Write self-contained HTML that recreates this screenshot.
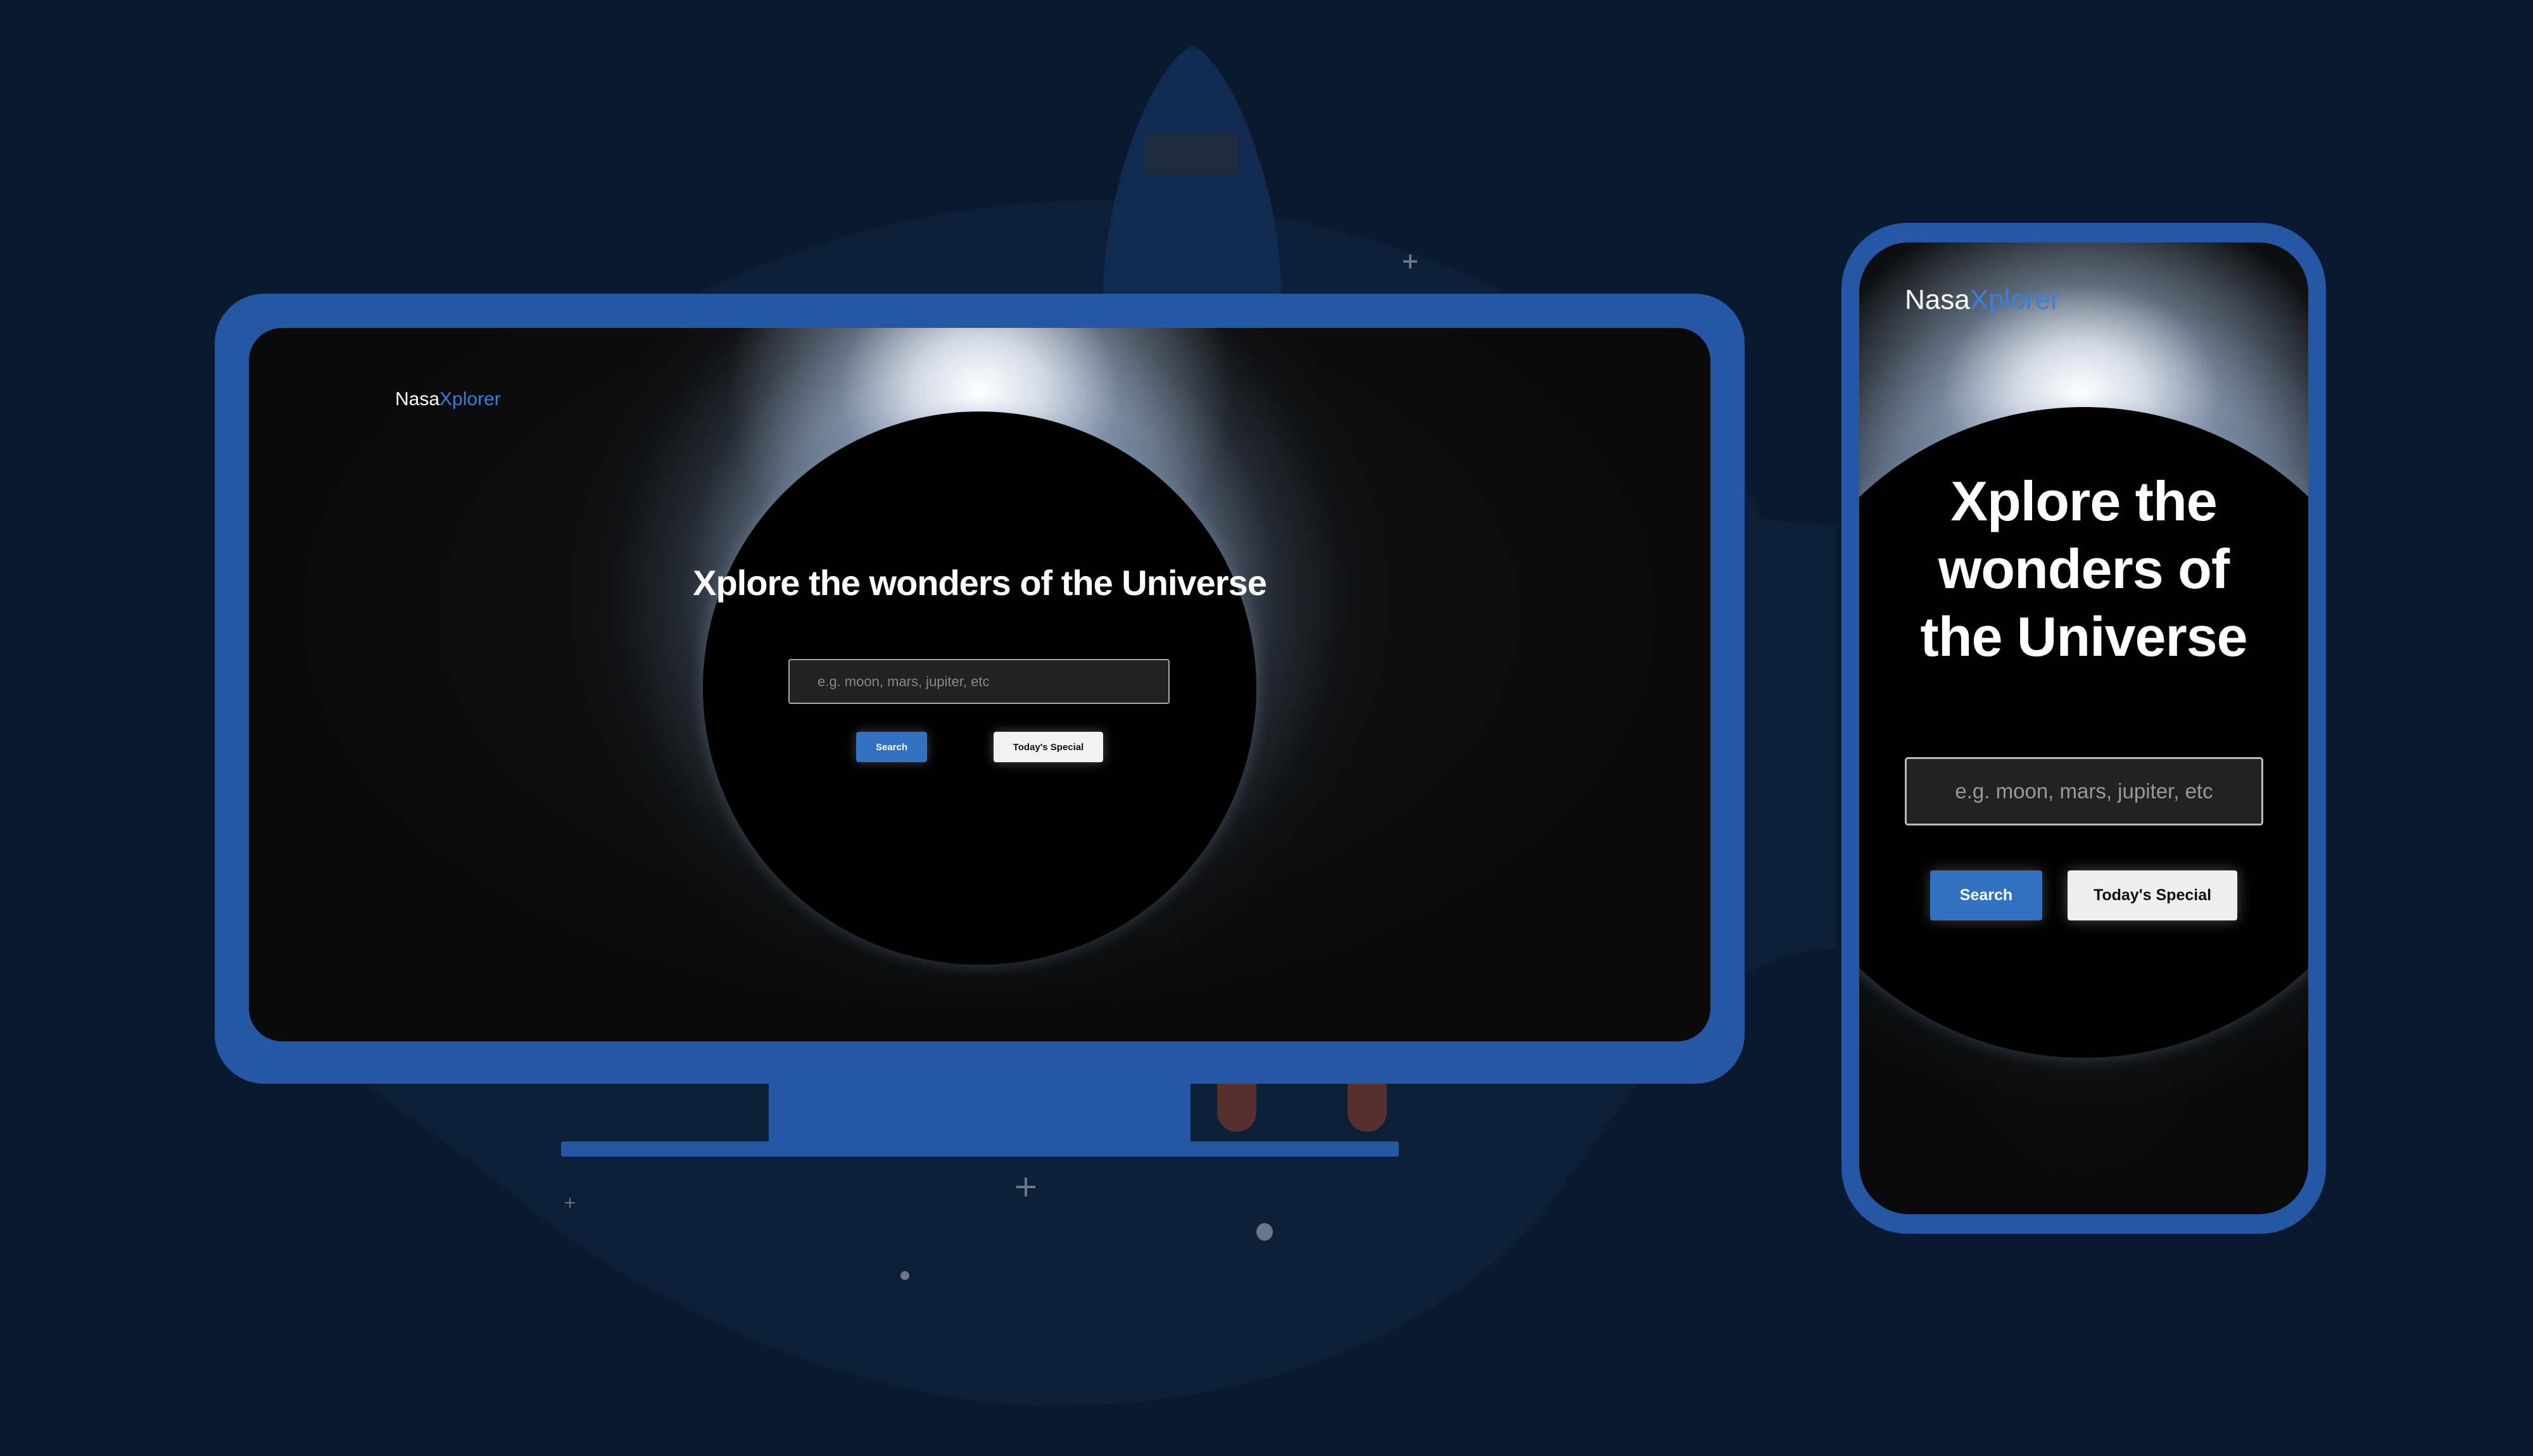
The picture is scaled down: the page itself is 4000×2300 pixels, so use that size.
<!DOCTYPE html>
<html><head><meta charset="utf-8"><style>
*{margin:0;padding:0;box-sizing:border-box}
body{width:4000px;height:2300px;background:#0a192d;position:relative;overflow:hidden;font-family:"Liberation Sans",sans-serif}
.abs{position:absolute}
.screen{overflow:hidden;background:#0b0b0b}
.glow{position:absolute;border-radius:50%}
.btn{position:absolute;display:flex;align-items:center;justify-content:center;font-weight:bold;border-radius:4px}
</style></head><body>
<svg class="abs" style="left:0;top:0" width="4000" height="2300">
<path d="M520 1650 C480 1200 700 600 1200 420 C1500 300 1800 290 2100 360 C2500 460 2750 700 2780 820 L2900 830 L2900 1500 C2700 1500 2600 1700 2450 1900 C2250 2150 1900 2230 1620 2220 C1300 2200 1000 2050 800 1880 C650 1760 540 1700 520 1650Z" fill="#0d1e37"/>
<path d="M1742 470 C1742 300 1820 100 1883 72 C1946 100 2024 300 2024 470 Z" fill="#112a4f"/>
<rect x="1808" y="209" width="147" height="68" rx="10" fill="#1e2a3d"/>
<rect x="1922" y="1700" width="62" height="88" rx="31" fill="#55302f"/>
<rect x="2128" y="1700" width="62" height="88" rx="31" fill="#55302f"/>
<rect x="1922" y="1700" width="62" height="40" fill="#55302f"/>
<rect x="2128" y="1700" width="62" height="40" fill="#55302f"/>
<g stroke="#6b7789" stroke-width="4"><path d="M2227 402v22M2216 413h22"/><path d="M1620 1860v30M1605 1875h30"/></g>
<g stroke="#6b7789" stroke-width="2"><path d="M900 1892v16M892 1900h16"/></g>
<ellipse cx="1997" cy="1946" rx="13" ry="14" fill="#6b7789"/>
<circle cx="1429" cy="2015" r="7" fill="#6b7789"/>
</svg>
<!-- monitor -->
<div class="abs" style="left:339px;top:464px;width:2416px;height:1248px;background:#2657a5;border-radius:78px"></div>
<div class="abs" style="left:1214px;top:1700px;width:666px;height:112px;background:#2657a5"></div>
<div class="abs" style="left:886px;top:1803px;width:1323px;height:24px;background:#2657a5;border-radius:4px"></div>
<div class="abs screen" style="left:393px;top:518px;width:2308px;height:1127px;border-radius:52px;background:radial-gradient(ellipse at 50% 40%,#141414 0%,#0a0a0a 70%)">
  <div class="glow" style="left:504px;top:-230px;width:1300px;height:1300px;background:radial-gradient(closest-side,rgba(150,175,210,.5) 55%,rgba(110,135,170,.22) 72%,rgba(60,70,90,.07) 88%,rgba(0,0,0,0) 100%)"></div>
  <div class="glow" style="left:754px;top:-250px;width:800px;height:700px;background:radial-gradient(closest-side,rgba(255,255,255,1) 0%,rgba(235,240,250,.85) 25%,rgba(170,190,215,.45) 55%,rgba(0,0,0,0) 100%)"></div>
  <div class="glow" style="left:717px;top:132px;width:874px;height:874px;background:radial-gradient(circle at 50% 50%,#000 80%,#050c18 90%,#1f3f6e 97%,#5b8fd0 100%);box-shadow:0 0 25px rgba(130,160,200,.35)"></div>
  <div class="abs" style="left:231px;top:96px;font-size:30px;color:#fff">Nasa<span style="color:#3a7fe0">Xplorer</span></div>
  <div class="abs" style="left:0;width:2308px;top:370px;text-align:center;font-size:56px;font-weight:bold;color:#fff;letter-spacing:-1px">Xplore the wonders of the Universe</div>
  <div class="abs" style="left:852px;top:523px;width:602px;height:71px;background:#222;border:2px solid #aaa;border-radius:4px;color:#888;font-size:22px;padding-left:44px;line-height:67px">e.g. moon, mars, jupiter, etc</div>
  <div class="btn" style="left:959px;top:638px;width:112px;height:48px;background:#3270c0;color:#fff;font-size:15px;box-shadow:0 0 18px rgba(255,255,255,.25)">Search</div>
  <div class="btn" style="left:1176px;top:638px;width:173px;height:48px;background:#f2f2f2;color:#111;font-size:15px;box-shadow:0 0 18px rgba(255,255,255,.3)">Today's Special</div>
</div>
<!-- phone -->
<div class="abs" style="left:2908px;top:352px;width:765px;height:1597px;background:#2657a5;border-radius:104px"></div>
<div class="abs screen" style="left:2936px;top:383px;width:709px;height:1535px;border-radius:78px;background:radial-gradient(ellipse at 50% 40%,#151515 0%,#0a0a0a 70%)">
  <div class="glow" style="left:-395px;top:-130px;width:1500px;height:1500px;background:radial-gradient(closest-side,rgba(150,175,210,.5) 56%,rgba(110,135,170,.22) 72%,rgba(60,70,90,.07) 88%,rgba(0,0,0,0) 100%)"></div>
  <div class="glow" style="left:-50px;top:-80px;width:800px;height:640px;background:radial-gradient(closest-side,rgba(255,255,255,1) 0%,rgba(235,240,250,.85) 25%,rgba(170,190,215,.45) 55%,rgba(0,0,0,0) 100%)"></div>
  <div class="glow" style="left:-159px;top:260px;width:1028px;height:1028px;background:radial-gradient(circle at 50% 50%,#000 81%,#050c18 90%,#1f3f6e 97%,#5b8fd0 100%);box-shadow:0 0 25px rgba(130,160,200,.35)"></div>
  <div class="abs" style="left:72px;top:66px;font-size:44px;color:#fff">Nasa<span style="color:#3a7fe0">Xplorer</span></div>
  <div class="abs" style="left:0;width:709px;top:355px;text-align:center;font-size:88px;line-height:107px;font-weight:bold;color:#fff;letter-spacing:-1px">Xplore the<br>wonders of<br>the Universe</div>
  <div class="abs" style="left:72px;top:813px;width:566px;height:108px;background:#222;border:3px solid #bbb;border-radius:5px;color:#999;font-size:33px;text-align:center;line-height:102px">e.g. moon, mars, jupiter, etc</div>
  <div class="btn" style="left:112px;top:992px;width:177px;height:79px;background:#3270c0;color:#fff;font-size:25px;box-shadow:0 0 22px rgba(255,255,255,.25)">Search</div>
  <div class="btn" style="left:329px;top:992px;width:268px;height:79px;background:#eee;color:#111;font-size:25px;box-shadow:0 0 22px rgba(255,255,255,.3)">Today's Special</div>
</div>
</body></html>
